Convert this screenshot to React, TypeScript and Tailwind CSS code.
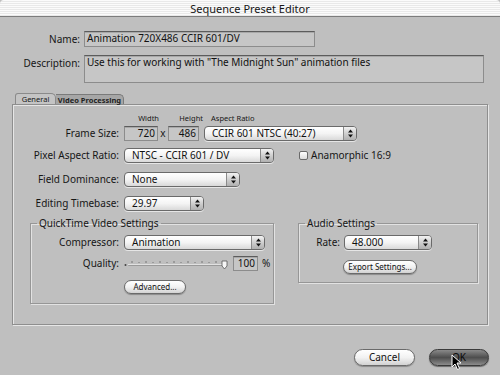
import React from 'react';

const font = 'font-["Noto_Sans","DejaVu_Sans",sans-serif]';

const Arrows: React.FC = () => (
  <svg width="7" height="9" viewBox="0 0 7 9">
    <path d="M3.5 0.5 L6 3.5 L1 3.5 Z" fill="#111" />
    <path d="M3.5 8.5 L6 5.5 L1 5.5 Z" fill="#111" />
  </svg>
);

const Select: React.FC<{ value: string; w: string }> = ({ value, w }) => (
  <div
    className={`${w} h-[15px] flex rounded-[4px] border border-[#6a6a6a] bg-gradient-to-b from-white via-[#f4f4f4] to-[#d9d9d9] shadow-[0_1px_0_#e6e6e6] overflow-hidden`}
  >
    <div className="flex-1 pl-[7px] text-[10px] leading-[13px] text-[#111] whitespace-nowrap overflow-hidden">{value}</div>
    <div className="w-[13px] flex items-center justify-center border-l border-[#8a8a8a] bg-gradient-to-b from-[#f2f2f2] via-[#cfcfcf] to-[#b0b0b0]">
      <Arrows />
    </div>
  </div>
);

const Field: React.FC<{ value: string; w: string; h?: string; right?: boolean }> = ({ value, w, h = 'h-[15px]', right }) => (
  <div
    className={`${w} ${h} border border-[#8c8c8c] border-t-[#5c5c5c] bg-[#c6c6c6] shadow-[inset_0_1px_0_#a8a8a8] px-[2px] text-[10px] leading-[13px] text-[#111] whitespace-nowrap overflow-hidden ${right ? 'text-right' : ''}`}
  >
    {value}
  </div>
);

const Pill: React.FC<{ label: string; w: string; small?: boolean }> = ({ label, w, small }) => (
  <div
    className={`${w} ${small ? 'h-[14px] text-[8px]' : 'h-[17px] text-[10px]'} rounded-full border border-[#6a6a6a] bg-gradient-to-b from-white via-[#f2f2f2] to-[#d2d2d2] shadow-[0_1px_1px_#8a8a8a] flex items-center justify-center text-[#111]`}
  >
    {label}
  </div>
);

const Slider: React.FC = () => (
  <svg width="106" height="12" viewBox="0 0 106 12">
    <circle cx="1.5" cy="7" r="1" fill="#444" />
    <rect x="4" y="6" width="98" height="2" rx="1" fill="#9a9a9a" />
    <line x1="4" y1="6.5" x2="102" y2="6.5" stroke="#f4f4f4" strokeWidth="0.8" />
    {Array.from({ length: 14 }).map((_, i) => (
      <line key={i} x1={8 + i * 7} y1={i % 2 ? 4 : 3} x2={8 + i * 7} y2="5" stroke="#666" strokeWidth="0.8" />
    ))}
    <path d="M98 3 L103 3 L103 8 L100.5 11 L98 8 Z" fill="#f6f6f6" stroke="#555" strokeWidth="0.8" />
  </svg>
);

const App: React.FC = () => {
  return (
    <div className={`relative w-[500px] h-[375px] bg-[#bfbfbf] text-[#161616] overflow-hidden ${font}`}>
      {/* Title bar */}
      <div className="h-[17px] rounded-tl-[4px] rounded-tr-[4px] border-b border-[#7c7c7c] bg-[repeating-linear-gradient(180deg,#fbfbfb_0px,#fbfbfb_1px,#e9e9e9_1px,#e9e9e9_2px)] flex items-center justify-center text-[11px] leading-none">
        Sequence Preset Editor
      </div>

      {/* Name */}
      <div className="flex items-center mt-[14px]">
        <div className="w-[80px] text-right text-[10px]">Name:</div>
        <div className="ml-[4px]">
          <Field value="Animation 720X486 CCIR 601/DV" w="w-[231px]" h="h-[16px]" />
        </div>
      </div>

      {/* Description */}
      <div className="flex items-start mt-[8px]">
        <div className="w-[80px] text-right text-[10px] pt-[1px]">Description:</div>
        <div className="ml-[4px]">
          <Field value={'Use this for working with "The Midnight Sun" animation files'} w="w-[400px]" h="h-[28px]" />
        </div>
      </div>

      {/* Tabs + panel */}
      <div className="ml-[12px] w-[476px] mt-[10px]">
        <div className="flex h-[11px] items-end pl-[3px]">
          <div className="h-[11px] w-[41px] border border-b-0 border-[#8a8a8a] rounded-tl-[3px] rounded-tr-[5px] bg-[#c4c4c4] text-[7.5px] leading-[10px] text-center">
            General
          </div>
          <div className="h-[10px] w-[68px] border border-b-0 border-l-0 border-[#7a7a7a] rounded-tr-[5px] bg-[#a6a6a6] text-[7.5px] leading-[10px] font-bold text-center text-[#222]">
            Video Processing
          </div>
        </div>
        <div className="h-[221px] border border-[#8e8e8e] shadow-[inset_1px_1px_0_#e6e6e6,1px_1px_0_#e6e6e6]">
          {/* Column headers */}
          <div className="flex h-[9px] mt-[9px] text-[7.5px] leading-[9px]">
            <div className="w-[119px]" />
            <div className="w-[34px] text-right pr-[7px]">Width</div>
            <div className="w-[41px] text-right pr-[4px]">Height</div>
            <div className="ml-[4px]">Aspect Ratio</div>
          </div>

          {/* Frame size */}
          <div className="flex items-center mt-[3px]">
            <div className="w-[106px] text-right text-[10px] mr-[5px]">Frame Size:</div>
            <Field value="720" w="w-[34px]" right />
            <div className="w-[10px] text-center text-[10px]">x</div>
            <Field value="486" w="w-[31px]" right />
            <div className="ml-[5px]">
              <Select value="CCIR 601 NTSC (40:27)" w="w-[153px]" />
            </div>
          </div>

          {/* Pixel aspect */}
          <div className="flex items-center mt-[7px]">
            <div className="w-[106px] text-right text-[10px] mr-[5px]">Pixel Aspect Ratio:</div>
            <Select value="NTSC - CCIR 601 / DV" w="w-[150px]" />
            <div className="ml-[25px] w-[9px] h-[9px] rounded-[2px] border border-[#6a6a6a] bg-gradient-to-b from-white to-[#dcdcdc]" />
            <div className="ml-[3px] text-[10px]">Anamorphic 16:9</div>
          </div>

          {/* Field dominance */}
          <div className="flex items-center mt-[9px]">
            <div className="w-[106px] text-right text-[10px] mr-[5px]">Field Dominance:</div>
            <Select value="None" w="w-[116px]" />
          </div>

          {/* Timebase */}
          <div className="flex items-center mt-[9px]">
            <div className="w-[106px] text-right text-[10px] mr-[5px]">Editing Timebase:</div>
            <Select value="29.97" w="w-[80px]" />
          </div>

          {/* Groups */}
          <div className="flex items-start mt-[6px] ml-[17px] gap-[24px]">
            <fieldset className="w-[244px] border border-[#969696] shadow-[inset_1px_1px_0_#e2e2e2,1px_1px_0_#e2e2e2] pb-[9px]">
              <legend className="ml-[6px] px-[2px] text-[10px] leading-[12px]">QuickTime Video Settings</legend>
              <div className="flex items-center mt-[6px]">
                <div className="w-[88px] text-right text-[10px] mr-[5px]">Compressor:</div>
                <Select value="Animation" w="w-[141px]" />
              </div>
              <div className="flex items-center mt-[6px]">
                <div className="w-[88px] text-right text-[10px] mr-[5px]">Quality:</div>
                <Slider />
                <div className="ml-[3px]">
                  <Field value="100" w="w-[25px]" right />
                </div>
                <div className="ml-[4px] text-[10px]">%</div>
              </div>
              <div className="mt-[9px] pl-[93px]">
                <Pill label="Advanced..." w="w-[62px]" small />
              </div>
            </fieldset>

            <fieldset className="w-[180px] border border-[#969696] shadow-[inset_1px_1px_0_#e2e2e2,1px_1px_0_#e2e2e2] pb-[8px]">
              <legend className="ml-[6px] px-[2px] text-[10px] leading-[12px]">Audio Settings</legend>
              <div className="flex items-center mt-[6px]">
                <div className="w-[41px] text-right text-[10px] mr-[4px]">Rate:</div>
                <Select value="48.000" w="w-[88px]" />
              </div>
              <div className="mt-[10px] pl-[44px]">
                <Pill label="Export Settings..." w="w-[74px]" small />
              </div>
            </fieldset>
          </div>
        </div>
      </div>

      {/* Bottom buttons */}
      <div className="flex justify-end gap-[14px] pr-[11px] mt-[24px]">
        <Pill label="Cancel" w="w-[61px]" />
        <div className="w-[60px] h-[17px] rounded-full border border-[#3a3a3a] bg-gradient-to-b from-[#8a8a8a] via-[#4e4e4e] to-[#8c8c8c] shadow-[0_1px_1px_#6a6a6a] flex items-center justify-center text-[10px] text-[#0a0a0a]">
          OK
        </div>
      </div>

      {/* Mouse cursor */}
      <svg className="absolute left-[451px] top-[354px]" width="11" height="17" viewBox="0 0 11 17">
        <path d="M1 1 L1 13 L4 10 L6.5 15.5 L8.5 14.5 L6 9 L10 9 Z" fill="#000" stroke="#fff" strokeWidth="1" />
      </svg>
    </div>
  );
};

export default App;
